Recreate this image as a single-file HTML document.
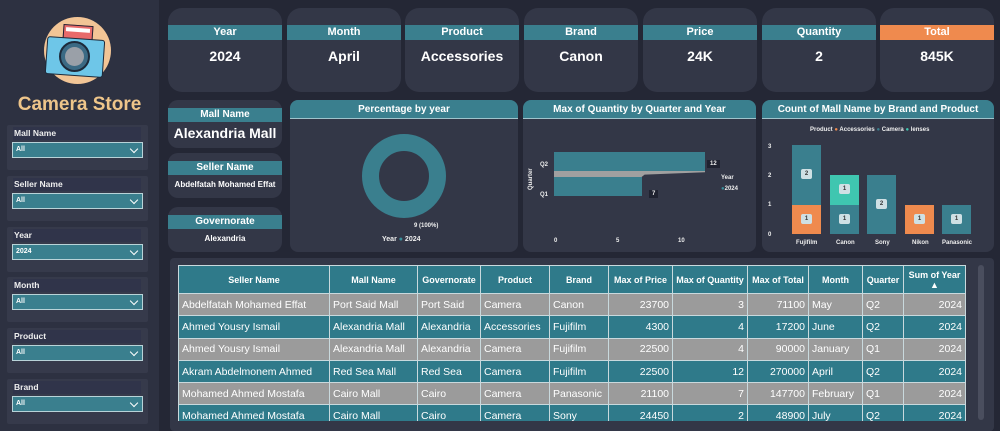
<!DOCTYPE html>
<html><head><meta charset="utf-8"><style>
*{box-sizing:border-box;margin:0;padding:0}
body{width:1000px;height:431px;overflow:hidden;background:#242735;font-family:"Liberation Sans",sans-serif;color:#fff;position:relative}
.a{position:absolute}
.side{left:0;top:0;width:159px;height:431px;background:#2d3141}
.fc{left:7px;width:141px;height:45px;background:#363a4b;border-radius:2px}
.fl{left:6px;top:2px;width:128px;height:13px;background:#30344a;font-size:8.5px;font-weight:bold;color:#eee;padding-left:1px;line-height:13px}
.dd{left:5px;top:17px;width:131px;height:16px;background:#3a7f8e;border:1px solid #b8d3d8;font-size:7px;font-weight:bold;padding-left:3px;line-height:14px}
.dd:after{content:"";position:absolute;right:5px;top:3px;width:5px;height:5px;border-right:1.3px solid #fff;border-bottom:1.3px solid #fff;transform:rotate(45deg)}
.kpi{top:8px;width:114px;height:84px;background:#333747;border-radius:14px}
.kh{left:0;top:17px;width:100%;height:15px;background:#3a7f8e;text-align:center;font-size:11px;font-weight:bold;line-height:15px}
.kv{left:0;top:40px;width:100%;text-align:center;font-size:14px;font-weight:bold}
.ic{left:168px;width:114px;background:#333747;border-radius:10px}
.ih{left:0;top:8px;width:100%;height:14px;background:#3a7f8e;text-align:center;font-size:10px;font-weight:bold;line-height:14px}
.ch{top:100px;height:152px;background:#333747;border-radius:8px;overflow:hidden}
.cht{left:0;top:0;width:100%;height:19px;background:#3a7f8e;text-align:center;font-size:10px;font-weight:bold;line-height:19px;border-bottom:1px solid #9fc4cc}
.s{font-size:6px;font-weight:bold;color:#eee}
.lb{font-size:6px;font-weight:bold;color:#333;background:#cfe0e4;border-radius:2px;width:11px;height:10px;text-align:center;line-height:10px}
table{border-collapse:collapse;font-size:10.5px}
td,th{border:1px solid #c9d9dd;padding:0 3px;white-space:nowrap;height:22.3px}
th{background:#2f7a8a;font-size:9px;height:28px;font-weight:bold}
tr.g td{background:#9b9b9b}
tr.t td{background:#2f7a8a}
td.r{text-align:right}
</style></head><body>
<div class="a side">
 <div class="a" style="left:44px;top:17px;width:67px;height:67px;border-radius:50%;background:#f2c596"></div>
 <div class="a" style="left:63px;top:25px;width:30px;height:16px;background:#e86a6a;border:1px solid #223;transform:rotate(4deg)"></div>
 <div class="a" style="left:66px;top:28px;width:24px;height:4px;background:#fff;transform:rotate(4deg)"></div>
 <div class="a" style="left:46px;top:38px;width:58px;height:38px;background:#6ec6e8;border:1.5px solid #1d2a3a;border-radius:3px;transform:rotate(4deg)"></div>
 <div class="a" style="left:59px;top:41px;width:31px;height:31px;border-radius:50%;background:#3b6a84;border:2px solid #1d2a3a"></div>
 <div class="a" style="left:65px;top:47px;width:19px;height:19px;border-radius:50%;background:#9aa0a8"></div>
 <div class="a" style="left:0;top:94px;width:159px;text-align:center;font-size:19px;font-weight:bold;color:#eec58a">Camera Store</div>
 <div class="a fc" style="top:125px"><div class="a fl">Mall Name</div><div class="a dd">All</div></div>
 <div class="a fc" style="top:176px"><div class="a fl">Seller Name</div><div class="a dd">All</div></div>
 <div class="a fc" style="top:227px"><div class="a fl">Year</div><div class="a dd">2024</div></div>
 <div class="a fc" style="top:277px"><div class="a fl">Month</div><div class="a dd">All</div></div>
 <div class="a fc" style="top:328px"><div class="a fl">Product</div><div class="a dd">All</div></div>
 <div class="a fc" style="top:379px"><div class="a fl">Brand</div><div class="a dd">All</div></div>
</div>
<div class="a kpi" style="left:168px"><div class="a kh">Year</div><div class="a kv">2024</div></div>
<div class="a kpi" style="left:287px"><div class="a kh">Month</div><div class="a kv">April</div></div>
<div class="a kpi" style="left:405px"><div class="a kh">Product</div><div class="a kv">Accessories</div></div>
<div class="a kpi" style="left:524px"><div class="a kh">Brand</div><div class="a kv">Canon</div></div>
<div class="a kpi" style="left:643px"><div class="a kh">Price</div><div class="a kv">24K</div></div>
<div class="a kpi" style="left:762px"><div class="a kh">Quantity</div><div class="a kv">2</div></div>
<div class="a kpi" style="left:880px"><div class="a kh" style="background:#ef8a4e">Total</div><div class="a kv">845K</div></div>

<div class="a ic" style="top:100px;height:48px"><div class="a ih">Mall Name</div><div class="a" style="left:0;top:25px;width:100%;text-align:center;font-size:14px;font-weight:bold">Alexandria Mall</div></div>
<div class="a ic" style="top:153px;height:45px"><div class="a ih">Seller Name</div><div class="a" style="left:0;top:27px;width:100%;text-align:center;font-size:8px;font-weight:bold">Abdelfatah Mohamed Effat</div></div>
<div class="a ic" style="top:207px;height:45px"><div class="a ih">Governorate</div><div class="a" style="left:0;top:27px;width:100%;text-align:center;font-size:8px;font-weight:bold">Alexandria</div></div>

<div class="a ch" style="left:290px;width:228px"><div class="a cht">Percentage by year</div>
 <div class="a" style="left:72px;top:34px;width:84px;height:84px;border-radius:50%;border:17px solid #3a7f8e"></div>
 <div class="a s" style="left:124px;top:123px">9 (100%)</div>
 <div class="a s" style="left:92px;top:136px;font-size:7px">Year <span style="color:#3a8e9a">●</span> 2024</div>
</div>

<div class="a ch" style="left:523px;width:233px"><div class="a cht">Max of Quantity by Quarter and Year</div>
 <div class="a" style="left:31px;top:52px;width:151px;height:20px;background:#3a7f8e"></div>
 <div class="a" style="left:31px;top:71px;width:151px;height:6px;background:#a0a0a0;clip-path:polygon(0 0,100% 0,100% 20%,60% 60%,58% 100%,0 100%)"></div>
 <div class="a" style="left:31px;top:77px;width:88px;height:19px;background:#3a7f8e"></div>
 <div class="a s" style="left:184px;top:60px;background:#1f2230;padding:1px 3px">12</div>
 <div class="a s" style="left:126px;top:90px;background:#1f2230;padding:1px 3px">7</div>
 <div class="a s" style="left:17px;top:62px">Q2</div><div class="a s" style="left:17px;top:92px">Q1</div>
 <div class="a s" style="left:5px;top:90px;transform:rotate(-90deg);transform-origin:left top">Quarter</div>
 <div class="a s" style="left:198px;top:75px">Year</div><div class="a s" style="left:198px;top:86px"><span style="color:#3a8e9a">●</span>2024</div>
 <div class="a s" style="left:31px;top:138px">0</div><div class="a s" style="left:93px;top:138px">5</div><div class="a s" style="left:155px;top:138px">10</div>
</div>

<div class="a ch" style="left:762px;width:232px"><div class="a cht">Count of Mall Name by Brand and Product</div>
 <div class="a s" style="left:48px;top:27px">Product <span style="color:#ef8a4e">●</span> Accessories <span style="color:#3a7f8e">●</span> Camera <span style="color:#3fc6b0">●</span> lenses</div>
 <div class="a s" style="left:6px;top:44px">3</div><div class="a s" style="left:6px;top:73px">2</div><div class="a s" style="left:6px;top:102px">1</div><div class="a s" style="left:6px;top:132px">0</div>
 <div class="a" style="left:30px;top:45px;width:29px;height:60px;background:#3a7f8e"></div>
 <div class="a" style="left:30px;top:105px;width:29px;height:29px;background:#ef8a4e"></div>
 <div class="a" style="left:68px;top:75px;width:29px;height:30px;background:#3fc6b0"></div>
 <div class="a" style="left:68px;top:105px;width:29px;height:29px;background:#3a7f8e"></div>
 <div class="a" style="left:105px;top:75px;width:29px;height:59px;background:#3a7f8e"></div>
 <div class="a" style="left:143px;top:105px;width:29px;height:29px;background:#ef8a4e"></div>
 <div class="a" style="left:180px;top:105px;width:29px;height:29px;background:#3a7f8e"></div>
 <div class="a lb" style="left:39px;top:69px">2</div><div class="a lb" style="left:39px;top:114px">1</div>
 <div class="a lb" style="left:77px;top:84px">1</div><div class="a lb" style="left:77px;top:114px">1</div>
 <div class="a lb" style="left:114px;top:99px">2</div><div class="a lb" style="left:152px;top:114px">1</div><div class="a lb" style="left:189px;top:114px">1</div>
 <div class="a s" style="left:34px;top:140px">Fujifilm</div><div class="a s" style="left:74px;top:140px">Canon</div><div class="a s" style="left:113px;top:140px">Sony</div><div class="a s" style="left:150px;top:140px">Nikon</div><div class="a s" style="left:180px;top:140px">Panasonic</div>
</div>

<div class="a" style="left:170px;top:258px;width:824px;height:173px;background:#333747;border-radius:4px"></div>
<div class="a" style="left:978px;top:265px;width:6px;height:155px;background:#4a4e5e;border-radius:3px"></div>
<div class="a" style="left:178px;top:265px;width:788px;height:156px;overflow:hidden">
<table style="width:788px">
<tr><th style="width:151px">Seller Name</th><th style="width:88px">Mall Name</th><th style="width:63px">Governorate</th><th style="width:69px">Product</th><th style="width:59px">Brand</th><th style="width:64px">Max of Price</th><th style="width:75px">Max of Quantity</th><th style="width:61px">Max of Total</th><th style="width:54px">Month</th><th style="width:41px">Quarter</th><th>Sum of Year<br>▲</th></tr>
<tr class="g"><td>Abdelfatah Mohamed Effat</td><td>Port Said Mall</td><td>Port Said</td><td>Camera</td><td>Canon</td><td class="r">23700</td><td class="r">3</td><td class="r">71100</td><td>May</td><td>Q2</td><td class="r">2024</td></tr>
<tr class="t"><td>Ahmed Yousry Ismail</td><td>Alexandria Mall</td><td>Alexandria</td><td>Accessories</td><td>Fujifilm</td><td class="r">4300</td><td class="r">4</td><td class="r">17200</td><td>June</td><td>Q2</td><td class="r">2024</td></tr>
<tr class="g"><td>Ahmed Yousry Ismail</td><td>Alexandria Mall</td><td>Alexandria</td><td>Camera</td><td>Fujifilm</td><td class="r">22500</td><td class="r">4</td><td class="r">90000</td><td>January</td><td>Q1</td><td class="r">2024</td></tr>
<tr class="t"><td>Akram Abdelmonem Ahmed</td><td>Red Sea Mall</td><td>Red Sea</td><td>Camera</td><td>Fujifilm</td><td class="r">22500</td><td class="r">12</td><td class="r">270000</td><td>April</td><td>Q2</td><td class="r">2024</td></tr>
<tr class="g"><td>Mohamed Ahmed Mostafa</td><td>Cairo Mall</td><td>Cairo</td><td>Camera</td><td>Panasonic</td><td class="r">21100</td><td class="r">7</td><td class="r">147700</td><td>February</td><td>Q1</td><td class="r">2024</td></tr>
<tr class="t"><td>Mohamed Ahmed Mostafa</td><td>Cairo Mall</td><td>Cairo</td><td>Camera</td><td>Sony</td><td class="r">24450</td><td class="r">2</td><td class="r">48900</td><td>July</td><td>Q2</td><td class="r">2024</td></tr>
</table></div>
</body></html>
